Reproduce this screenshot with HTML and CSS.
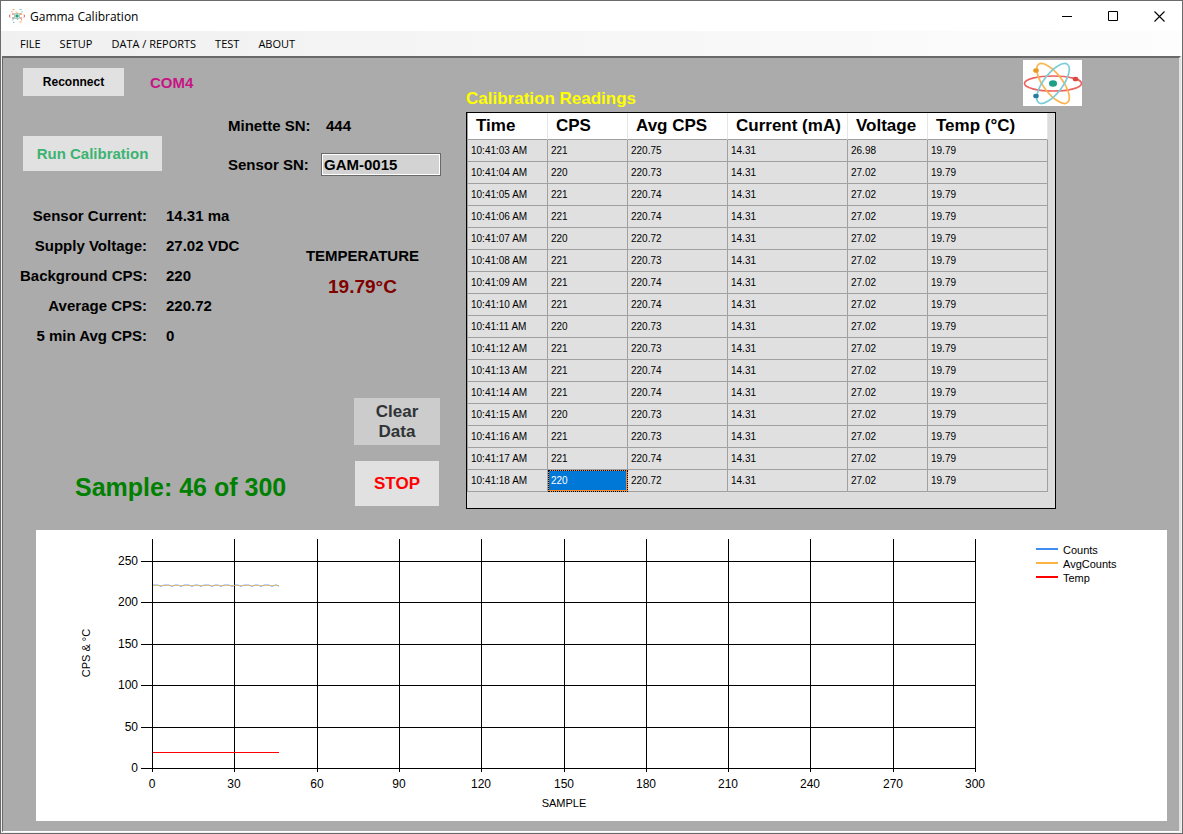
FILE: index.html
```html
<!DOCTYPE html>
<html lang="en">
<head>
    <meta charset="UTF-8">
    <meta name="viewport" content="width=device-width, initial-scale=1.0">
    <title>Gamma Calibration</title>
    <link rel="stylesheet" href="styles.css">
</head>
<body>
    <div class="window">
        <header class="title-bar">
            <svg class="app-icon" width="16" height="16" viewBox="0 0 16 16" fill="none">
                <path d="M1 6.500L.5 8L1 9.500M15 6.500L15.500 8L15 9.500M3 6H5M3 10H5M11 6H13M11 10H13" stroke="#e8604c"/>
                <path d="M3.500 1.500H5.500M3 3V4.500M7 3.500L8.500 5M12.500 11V12.500M10.500 14H12.500M11 5L12 7" stroke="#f2a654"/>
                <path d="M10.500 1.500H12.500M13 3V4.500M4 11V12.500M4 14.500H5.500M4 9L5 11M8 12L9 11" stroke="#6fc3d3"/>
                <path d="M5.500 5.500H10.500V10.500H5.500Z" stroke="#b9c7b5"/>
                <rect x="6.500" y="6.500" width="3" height="3" fill="#1f9e86"/>
            </svg>
            <span class="title">Gamma Calibration</span>
            <button class="win-button" aria-label="Minimize">
                <svg width="11" height="11" viewBox="0 0 11 11"><path d="M0 5.5h10" stroke="#000"/></svg>
            </button>
            <button class="win-button" aria-label="Maximize">
                <svg width="11" height="11" viewBox="0 0 11 11"><path d="M.5 .5h9v9h-9z" fill="none" stroke="#000"/></svg>
            </button>
            <button class="win-button" aria-label="Close">
                <svg width="11" height="11" viewBox="0 0 11 11"><path d="M.5 .5l10 10M10.500 .5l-10 10" stroke="#000" stroke-width="1.1"/></svg>
            </button>
        </header>

        <nav class="menu">
            <a href="#">FILE</a>
            <a href="#">SETUP</a>
            <a href="#">DATA / REPORTS</a>
            <a href="#">TEST</a>
            <a href="#">ABOUT</a>
        </nav>

        <main class="client">
            <div class="top">
                <section class="controls">
                    <div class="connection">
                        <button class="btn btn-reconnect">Reconnect</button>
                        <span class="port">COM4</span>
                    </div>

                    <div class="setup">
                        <button class="btn btn-run">Run Calibration</button>
                        <div class="serials">
                            <span>Minette SN:</span>
                            <span class="serial-value">444</span>
                            <label for="sensorSn">Sensor SN:</label>
                            <input id="sensorSn" type="text" value="GAM-0015">
                        </div>
                    </div>

                    <div class="status">
                        <dl class="live">
                            <dt>Sensor Current:</dt><dd>14.31 ma</dd>
                            <dt>Supply Voltage:</dt><dd>27.02 VDC</dd>
                            <dt>Background CPS:</dt><dd>220</dd>
                            <dt>Average CPS:</dt><dd>220.72</dd>
                            <dt>5 min Avg CPS:</dt><dd>0</dd>
                        </dl>
                        <div class="temperature">
                            <div>TEMPERATURE</div>
                            <div class="temp-value">19.79°C</div>
                        </div>
                    </div>

                    <div class="run">
                        <div class="sample">Sample: 46 of 300</div>
                        <div class="run-buttons">
                            <button class="btn btn-clear">Clear Data</button>
                            <button class="btn btn-stop">STOP</button>
                        </div>
                    </div>
                </section>

                <section class="readings">
                    <div class="readings-head">
                        <h2>Calibration Readings</h2>
                        <svg class="logo" width="59" height="46" viewBox="0 0 59 46" fill="none">
                            <rect width="59" height="46" fill="#fff"/>
                            <g stroke-width="1.700">
                                <ellipse cx="30" cy="23.500" rx="28.500" ry="7.500" stroke="#ec6460"/>
                                <ellipse cx="30" cy="23.500" rx="24" ry="9.500" stroke="#fbb44e" transform="rotate(53 30 23.500)"/>
                                <ellipse cx="30" cy="23.500" rx="24" ry="9.500" stroke="#7ccdd8" transform="rotate(-53 30 23.500)"/>
                            </g>
                            <ellipse cx="30" cy="23.500" rx="4" ry="3.200" fill="#1f9e86"/>
                            <ellipse cx="13" cy="10.500" rx="2.800" ry="2.300" fill="#ea9a1f"/>
                            <ellipse cx="13" cy="36" rx="2.800" ry="2.300" fill="#2b7da0"/>
                            <ellipse cx="52.500" cy="19" rx="2.800" ry="2.300" fill="#d94a43"/>
                        </svg>
                    </div>
                    <div class="grid">
                        <table>
                            <colgroup>
                                <col class="c80"><col class="c80"><col class="c100"><col class="c120"><col class="c80"><col class="c120">
                            </colgroup>
                            <thead>
                                <tr><th>Time</th><th>CPS</th><th>Avg CPS</th><th>Current (mA)</th><th>Voltage</th><th>Temp (°C)</th></tr>
                            </thead>
                            <tbody>
                                <tr><td>10:41:03 AM</td><td>221</td><td>220.75</td><td>14.31</td><td>26.98</td><td>19.79</td></tr>
                                <tr><td>10:41:04 AM</td><td>220</td><td>220.73</td><td>14.31</td><td>27.02</td><td>19.79</td></tr>
                                <tr><td>10:41:05 AM</td><td>221</td><td>220.74</td><td>14.31</td><td>27.02</td><td>19.79</td></tr>
                                <tr><td>10:41:06 AM</td><td>221</td><td>220.74</td><td>14.31</td><td>27.02</td><td>19.79</td></tr>
                                <tr><td>10:41:07 AM</td><td>220</td><td>220.72</td><td>14.31</td><td>27.02</td><td>19.79</td></tr>
                                <tr><td>10:41:08 AM</td><td>221</td><td>220.73</td><td>14.31</td><td>27.02</td><td>19.79</td></tr>
                                <tr><td>10:41:09 AM</td><td>221</td><td>220.74</td><td>14.31</td><td>27.02</td><td>19.79</td></tr>
                                <tr><td>10:41:10 AM</td><td>221</td><td>220.74</td><td>14.31</td><td>27.02</td><td>19.79</td></tr>
                                <tr><td>10:41:11 AM</td><td>220</td><td>220.73</td><td>14.31</td><td>27.02</td><td>19.79</td></tr>
                                <tr><td>10:41:12 AM</td><td>221</td><td>220.73</td><td>14.31</td><td>27.02</td><td>19.79</td></tr>
                                <tr><td>10:41:13 AM</td><td>221</td><td>220.74</td><td>14.31</td><td>27.02</td><td>19.79</td></tr>
                                <tr><td>10:41:14 AM</td><td>221</td><td>220.74</td><td>14.31</td><td>27.02</td><td>19.79</td></tr>
                                <tr><td>10:41:15 AM</td><td>220</td><td>220.73</td><td>14.31</td><td>27.02</td><td>19.79</td></tr>
                                <tr><td>10:41:16 AM</td><td>221</td><td>220.73</td><td>14.31</td><td>27.02</td><td>19.79</td></tr>
                                <tr><td>10:41:17 AM</td><td>221</td><td>220.74</td><td>14.31</td><td>27.02</td><td>19.79</td></tr>
                                <tr><td>10:41:18 AM</td><td class="selected">220</td><td>220.72</td><td>14.31</td><td>27.02</td><td>19.79</td></tr>
                            </tbody>
                        </table>
                    </div>
                </section>
            </div>

            <svg class="chart" viewBox="0 0 1131 291" fill="none">
                <!-- grid lines and ticks -->
                <g stroke="#000" shape-rendering="crispEdges">
                    <path d="M105 31.500H939M105 72.500H939M105 114.500H939M105 155.500H939M105 197.500H939M105 238.500H939"/>
                    <path d="M116.500 9V242M198.500 9V242M281.500 9V242M363.500 9V242M445.500 9V242M528.500 9V242M610.500 9V242M692.500 9V242M774.500 9V242M857.500 9V242M939.500 9V242"/>
                </g>

                <!-- series -->
                <path d="M117 55H122L125 56.500L128 55H133L136 56.500L139 55H142L145 56.500L148 55H153L156 56.500L159 55H162L165 56.500L168 55H173L176 56.500L179 55H182L185 56.500L188 55H193L196 56.500L199 55H202L205 56.500L208 55H213L216 56.500L219 55H222L225 56.500L228 55H233L236 56.500L239 55H241L243 56.500" stroke="#418cf0" stroke-opacity=".7"/>
                <path d="M117 55.500H243" stroke="#e8b05c" stroke-opacity=".7"/>
                <path d="M117 222.500H243" stroke="#f00"/>

                <g class="axis y-axis">
                    <text x="102" y="35">250</text>
                    <text x="102" y="76">200</text>
                    <text x="102" y="118">150</text>
                    <text x="102" y="159">100</text>
                    <text x="102" y="201">50</text>
                    <text x="102" y="242">0</text>
                </g>
                <g class="axis x-axis">
                    <text x="116" y="258">0</text>
                    <text x="198" y="258">30</text>
                    <text x="281" y="258">60</text>
                    <text x="363" y="258">90</text>
                    <text x="445" y="258">120</text>
                    <text x="528" y="258">150</text>
                    <text x="610" y="258">180</text>
                    <text x="692" y="258">210</text>
                    <text x="774" y="258">240</text>
                    <text x="857" y="258">270</text>
                    <text x="939" y="258">300</text>
                </g>
                <text class="axis-title" x="528" y="277">SAMPLE</text>
                <text class="axis-title" transform="translate(54 123) rotate(-90)">CPS &amp; °C</text>

                <g class="legend">
                    <path d="M1000 19h22" stroke="#418cf0" stroke-width="2"/>
                    <path d="M1000 33h22" stroke="#fcb441" stroke-width="2"/>
                    <path d="M1000 47h22" stroke="#f00" stroke-width="2"/>
                    <text x="1027" y="24">Counts</text>
                    <text x="1027" y="38">AvgCounts</text>
                    <text x="1027" y="52">Temp</text>
                </g>
            </svg>
        </main>
    </div>
</body>
</html>
```
FILE: styles.css
```css
* {
    box-sizing: border-box;
}
body {
    margin: 0;
    font-family: "Liberation Sans", Arial, sans-serif;
    font-size: 15px;
    color: #000;
}
.window {
    display: flex;
    flex-direction: column;
    min-height: 100vh;
    border: 1px solid #6b6b6b;
    background-color: #f0f0f0;
}

/* title bar */
.title-bar {
    display: flex;
    align-items: center;
    height: 30px;
    padding-left: 8px;
    background-color: #fff;
}
.title {
    flex: 1;
    margin-left: 5px;
    font-family: "Open Sans", "Noto Sans", sans-serif;
    font-size: 12px;
}
.win-button {
    display: flex;
    align-items: center;
    justify-content: center;
    width: 46px;
    height: 30px;
    padding: 0;
    border: none;
    background: none;
}

/* menu */
.menu {
    display: flex;
    align-items: center;
    gap: 19px;
    height: 25px;
    padding-left: 19px;
    background: linear-gradient(to right, #f0f0f0, #fdfdfd);
    font-family: "Open Sans", "Noto Sans", sans-serif;
    font-size: 11px;
}
.menu a {
    color: #000;
    text-decoration: none;
}

.client {
    flex: 1;
    margin: 0 1px 1px;
    padding-bottom: 10px;
    border: solid #696969;
    border-width: 2px 2px 1px 1px;
    border-right-color: #e3e3e3;
    border-bottom-color: #fff;
    background-color: #ababab;
}
.top {
    display: flex;
    gap: 25px;
    padding: 2px 0 0 17px;
}

/* buttons */
.btn {
    padding: 0;
    border: none;
    background-color: #e1e1e1;
    font-family: inherit;
    font-weight: bold;
}
.btn-reconnect {
    width: 101px;
    height: 28px;
    font-size: 12px;
}
.btn-run {
    width: 139px;
    height: 35px;
    margin-top: 21px;
    font-size: 15px;
    color: #3cb371;
}
.btn-clear {
    height: 47px;
    padding: 0 16px;
    background-color: #ccc;
    font-size: 17px;
    line-height: 20px;
    color: #2f3335;
}
.btn-stop {
    height: 45px;
    margin: 0 1px;
    font-size: 17px;
    color: #f00;
}

/* left side */
.controls {
    width: 421px;
    padding-top: 8px;
    font-weight: bold;
}
.connection {
    display: flex;
    align-items: center;
    gap: 26px;
    padding-left: 3px;
}
.port {
    color: #c71585;
}
.setup {
    display: flex;
    justify-content: space-between;
    align-items: flex-start;
    margin-top: 19px;
    padding-left: 3px;
}
.serials {
    display: grid;
    grid-template-columns: 84px 120px;
    column-gap: 9px;
    row-gap: 16px;
    align-items: center;
    line-height: 22px;
}
.serial-value {
    padding-left: 5px;
}
.serials input {
    width: 100%;
    height: 23px;
    padding: 0 2px;
    border: 1px solid #696969;
    outline: 1px solid #fff;
    outline-offset: -2px;
    background-color: #d3d3d3;
    font: inherit;
    line-height: 20px;
}
.status {
    display: flex;
    justify-content: space-between;
    margin-top: 25px;
    padding-right: 22px;
}
.live {
    display: grid;
    grid-template-columns: 127px auto;
    column-gap: 19px;
    margin: 0;
    line-height: 30px;
}
.live dt {
    text-align: right;
    white-space: nowrap;
}
.live dd {
    margin: 0;
}
.temperature {
    padding-top: 45px;
    line-height: 20px;
    text-align: center;
}
.temp-value {
    margin-top: 11px;
    font-size: 19px;
    color: #800000;
}
.run {
    display: flex;
    justify-content: space-between;
    align-items: flex-end;
    margin-top: 47px;
    padding: 0 1px 0 55px;
}
.sample {
    font-size: 25px;
    line-height: 38px;
    color: #008000;
}
.run-buttons {
    display: flex;
    flex-direction: column;
    gap: 16px;
    width: 86px;
}

/* readings table */
.readings {
    width: 616px;
}
.readings-head {
    display: flex;
    justify-content: space-between;
    height: 52px;
}
.readings-head h2 {
    align-self: flex-end;
    margin: 0;
    font-size: 17px;
    line-height: 26px;
    color: #ff0;
}
.grid {
    width: 590px;
    height: 397px;
    border: 1px solid #000;
    background-color: #dcdcdc;
}
table {
    width: 581px;
    table-layout: fixed;
    border-collapse: separate;
    border-spacing: 0;
    border-left: 1px solid #a0a0a0;
}
.c80 {
    width: 80px;
}
.c100 {
    width: 100px;
}
.c120 {
    width: 120px;
}
th {
    height: 27px;
    padding: 0 0 0 8px;
    border-right: 1px solid #e5e5e5;
    border-bottom: 1px solid #a0a0a0;
    background-color: #fff;
    font-size: 17px;
    line-height: 20px;
    text-align: left;
    white-space: nowrap;
}
td {
    height: 22px;
    padding: 0 0 0 3px;
    border-right: 1px solid #a0a0a0;
    border-bottom: 1px solid #a0a0a0;
    background-color: #e0e0e0;
    font-size: 10px;
    line-height: 16px;
    white-space: nowrap;
}
td.selected {
    background-color: #0078d7;
    box-shadow: inset 0 0 0 1px #ff8728;
    color: #fff;
    outline: 1px dotted #000;
    outline-offset: -1px;
}

/* chart */
.chart {
    display: block;
    width: calc(100% - 45px);
    margin: 21px 12px 0 33px;
    background-color: #fff;
}
.chart text {
    fill: #000;
    font-size: 11px;
}
.chart .axis text {
    font-size: 12px;
}
.x-axis,
.axis-title {
    text-anchor: middle;
}
.y-axis {
    text-anchor: end;
}
```
